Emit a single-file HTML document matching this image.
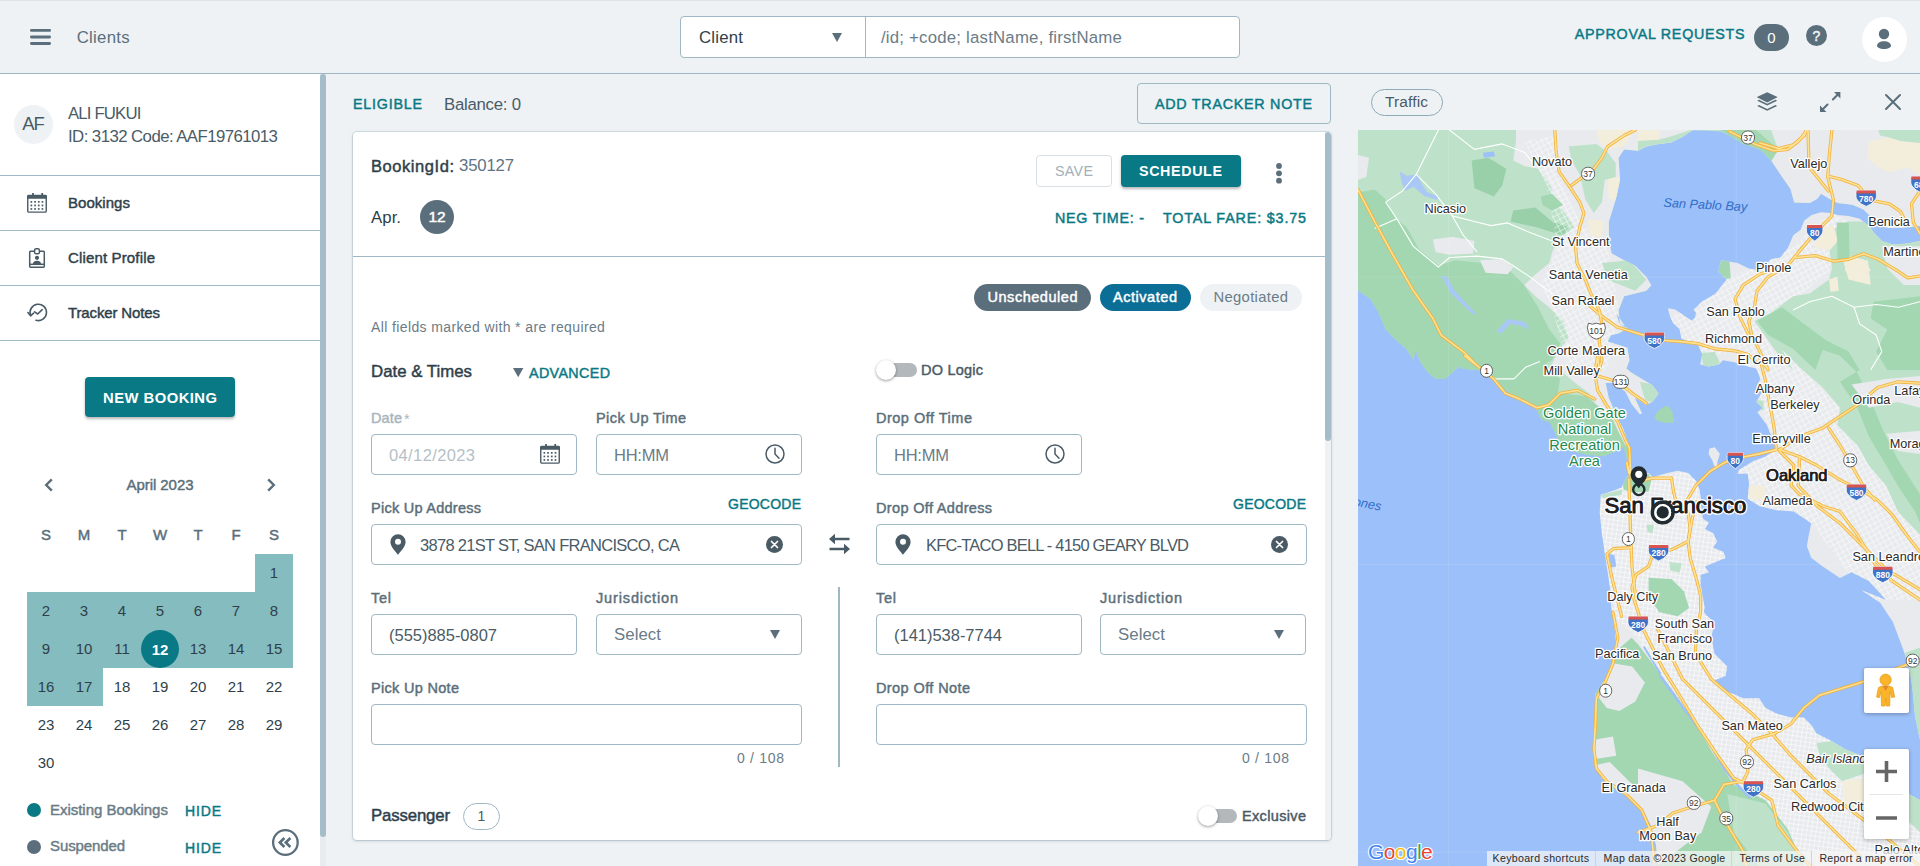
<!DOCTYPE html>
<html lang="en"><head><meta charset="utf-8"><title>Clients</title>
<style>
*{box-sizing:border-box;margin:0;padding:0}
html,body{width:1920px;height:866px;overflow:hidden;background:#eef2f5;font-family:"Liberation Sans", sans-serif;color:#4a5b66}
.abs,.t,header,aside,main,section,nav,button,.box,.ico{position:absolute}
.t{white-space:pre;display:block}
.sb{-webkit-text-stroke:.45px currentColor}
button{font-family:inherit;border:0;background:none;cursor:pointer}
header{left:0;top:0;width:1920px;height:74px;border-bottom:1px solid #9fb8c5;border-top:1px solid #dde4e9;background:#eef2f5}
aside.side{left:0;top:74px;width:320px;height:792px;background:#fff}
.resizer{left:320px;top:74px;width:6px;height:763px;background:#a5bdc9;border-radius:3px}
.rtrack{left:320px;top:74px;width:6px;height:792px;background:#e6ecf0}
.hr{position:absolute;height:1px;background:#9fb8c5}
.box{background:#fff;border:1px solid #9fb8c5;border-radius:4px}
.teal{background:#087985;border-radius:4px;box-shadow:0 2px 3px rgba(0,0,0,.28)}
.card{left:353px;top:132px;width:978px;height:708px;background:#fff;border-radius:4px;box-shadow:0 1px 3px rgba(60,80,95,.25),0 0 0 1px rgba(120,160,175,.22);overflow:hidden}
.pill{position:absolute;border-radius:14px}
svg{position:absolute;overflow:visible}
</style></head><body>
<header>
<svg class="ico" style="left:30px;top:28px" width="21" height="16" viewBox="0 0 21 16"><path d="M1.4 1.400h18.200M1.400 8h18.200M1.400 14.500h18.200" stroke="#5a6f7b" stroke-width="2.800" stroke-linecap="round" fill="none"/></svg>
<span class="t" style="left:76.7px;top:28.8px;font-size:16.8px;line-height:16.8px;color:#5a6f7b;letter-spacing:0.28px;">Clients</span>
<div class="box" style="left:680px;top:15px;width:560px;height:42px"></div>
<div class="abs" style="left:865px;top:16px;width:1px;height:40px;background:#9fb8c5"></div>
<span class="t" style="left:699.0px;top:29.3px;font-size:16.8px;line-height:16.8px;color:#2f3f4a;letter-spacing:0.22px;">Client</span>
<svg style="left:832px;top:32px" width="10" height="9"><path d="M0 0h10l-5 9z" fill="#5a6f7b"/></svg>
<span class="t" style="left:881.0px;top:29.3px;font-size:16.8px;line-height:16.8px;color:#6b7c87;letter-spacing:0.21px;">/id; +code; lastName, firstName</span>
<span class="t sb" style="left:1574.7px;top:25.9px;font-size:14.3px;line-height:14.3px;color:#087985;letter-spacing:0.74px;">APPROVAL REQUESTS</span>
<div class="pill" style="left:1754px;top:23px;width:35px;height:27px;background:#5a6f7b"></div>
<span class="t" style="left:1767.3px;top:28.5px;font-size:15px;line-height:15px;color:#fff;">0</span>
<div class="abs" style="left:1806px;top:24px;width:21px;height:21px;border-radius:50%;background:#5a6f7b"></div>
<span class="t sb" style="left:1812.6px;top:28.1px;font-size:14px;line-height:14px;color:#eef2f5;">?</span>
<div class="abs" style="left:1862px;top:16px;width:45px;height:45px;border-radius:50%;background:#fff"></div>
<svg style="left:1875px;top:27px" width="18" height="22" viewBox="0 0 18 22"><circle cx="9" cy="6" r="5.200" fill="#5a6f7b"/><path d="M2 17.800c0-2.600 3.100-4.600 7-4.600s7 2 7 4.600c0 1.800-3.100 3.200-7 3.200s-7-1.400-7-3.200z" fill="#5a6f7b"/></svg>
</header>
<aside class="side">
<div class="abs" style="left:14px;top:31px;width:39px;height:39px;border-radius:50%;background:#eef2f5"></div>
<span class="t" style="left:22.2px;top:41.3px;font-size:18.5px;line-height:18.5px;letter-spacing:-1.14px;">AF</span>
<span class="t" style="left:68.0px;top:31.8px;font-size:16.8px;line-height:16.8px;letter-spacing:-0.85px;">ALI FUKUI</span>
<span class="t" style="left:68.0px;top:54.8px;font-size:16.8px;line-height:16.8px;letter-spacing:-0.56px;">ID: 3132 Code: AAF19761013</span>
<div class="hr" style="left:0;top:101px;width:320px"></div>
<span class="t sb" style="left:68.0px;top:121.3px;font-size:15px;line-height:15px;color:#2f3f4a;letter-spacing:0.04px;">Bookings</span>
<div class="hr" style="left:0;top:156px;width:320px"></div>
<span class="t sb" style="left:68.0px;top:176.3px;font-size:15px;line-height:15px;color:#2f3f4a;letter-spacing:0.15px;">Client Profile</span>
<div class="hr" style="left:0;top:211px;width:320px"></div>
<span class="t sb" style="left:68.0px;top:231.3px;font-size:15px;line-height:15px;color:#2f3f4a;letter-spacing:-0.14px;">Tracker Notes</span>
<div class="hr" style="left:0;top:266px;width:320px"></div>
<svg style="left:27px;top:119px" width="20" height="20" viewBox="0 0 20 20" fill="#4a5b66"><path d="M1.5 1.800h17a1.500 1.500 0 0 1 1.500 1.500V5.800H0V3.300A1.500 1.500 0 0 1 1.500 1.800z"/><rect x="5.100" y="0" width="1.800" height="3"/><rect x="14.300" y="0" width="1.800" height="3"/><rect x="0.750" y="2.600" width="18.500" height="16.500" rx="1.200" fill="none" stroke="#4a5b66" stroke-width="1.400"/><rect x="3.5" y="8" width="1.700" height="1.700" /><rect x="7.2" y="8" width="1.700" height="1.700" /><rect x="10.9" y="8" width="1.700" height="1.700" /><rect x="14.6" y="8" width="1.700" height="1.700" /><rect x="3.5" y="11.6" width="1.700" height="1.700" /><rect x="7.2" y="11.6" width="1.700" height="1.700" /><rect x="10.9" y="11.6" width="1.700" height="1.700" /><rect x="14.6" y="11.6" width="1.700" height="1.700" /><rect x="3.5" y="15.1" width="1.700" height="1.700" /><rect x="7.2" y="15.1" width="1.700" height="1.700" /><rect x="10.9" y="15.1" width="1.700" height="1.700" /><rect x="14.6" y="15.1" width="1.700" height="1.700" /></svg><svg style="left:29px;top:174px" width="16" height="20" viewBox="0 0 16 20" fill="none" stroke="#4a5b66" stroke-width="1.5"><path d="M5 3.2H1.6a.9.9 0 0 0-.9.9v14.2a.9.9 0 0 0 .9.9h12.8a.9.9 0 0 0 .9-.9V4.100a.9.9 0 0 0-.9-.9H11"/><rect x="5.6" y="0.75" width="4.8" height="5" rx="1.6"/><path d="M1 16.3h14"/><circle cx="8" cy="9.8" r="2.1" fill="#4a5b66" stroke="none"/><path d="M3.9 16.3a4.1 3.6 0 0 1 8.2 0z" fill="#4a5b66" stroke="none"/></svg><svg style="left:26.5px;top:229px" width="21" height="19" viewBox="0 0 21 19" fill="none" stroke="#4a5b66" stroke-width="1.6" stroke-linecap="round" stroke-linejoin="round"><path d="M3.6 12.3A8.2 8.2 0 1 1 9 17.3"/><path d="M0.9 9.6l2.7 3.2 3-2.6" /><path d="M7.600 8.800l3.1 2.2 4.500-4.300"/></svg>
<button class="teal" style="left:85px;top:303px;width:150px;height:40px"></button>
<span class="t" style="left:103.0px;top:316.8px;font-size:14.8px;line-height:14.8px;font-weight:700;color:#fff;letter-spacing:0.47px;">NEW BOOKING</span>
<svg style="left:44px;top:403.5px" width="10" height="14" viewBox="0 0 10 14"><path d="M7.800 1.400L2.200 7l5.600 5.600" stroke="#5a6f7b" stroke-width="2.400" fill="none"/></svg>
<svg style="left:265.500px;top:403.5px" width="10" height="14" viewBox="0 0 10 14"><path d="M2.200 1.400l5.600 5.600-5.600 5.600" stroke="#5a6f7b" stroke-width="2.400" fill="none"/></svg>
<span class="t sb" style="left:126.5px;top:402.8px;font-size:15px;line-height:15px;color:#5a6f7b;letter-spacing:-0.06px;">April 2023</span>
<div class="abs" style="left:255px;top:480px;width:38px;height:38px;background:#85bcc0"></div>
<div class="abs" style="left:27px;top:518px;width:266px;height:76px;background:#85bcc0"></div>
<div class="abs" style="left:27px;top:594px;width:76px;height:38px;background:#85bcc0"></div>
<div class="abs" style="left:141px;top:556px;width:38px;height:38px;border-radius:50%;background:#087985"></div>
<span class="t sb" style="left:41.0px;top:453.3px;font-size:15px;line-height:15px;color:#5a6f7b;">S</span>
<span class="t sb" style="left:77.8px;top:453.3px;font-size:15px;line-height:15px;color:#5a6f7b;">M</span>
<span class="t sb" style="left:117.4px;top:453.3px;font-size:15px;line-height:15px;color:#5a6f7b;">T</span>
<span class="t sb" style="left:152.9px;top:453.3px;font-size:15px;line-height:15px;color:#5a6f7b;">W</span>
<span class="t sb" style="left:193.4px;top:453.3px;font-size:15px;line-height:15px;color:#5a6f7b;">T</span>
<span class="t sb" style="left:231.4px;top:453.3px;font-size:15px;line-height:15px;color:#5a6f7b;">F</span>
<span class="t sb" style="left:269.0px;top:453.3px;font-size:15px;line-height:15px;color:#5a6f7b;">S</span>
<span class="t" style="left:269.8px;top:491.3px;font-size:15px;line-height:15px;color:#2f3f4a;">1</span>
<span class="t" style="left:41.8px;top:529.3px;font-size:15px;line-height:15px;color:#2f3f4a;">2</span>
<span class="t" style="left:79.8px;top:529.3px;font-size:15px;line-height:15px;color:#2f3f4a;">3</span>
<span class="t" style="left:117.8px;top:529.3px;font-size:15px;line-height:15px;color:#2f3f4a;">4</span>
<span class="t" style="left:155.8px;top:529.3px;font-size:15px;line-height:15px;color:#2f3f4a;">5</span>
<span class="t" style="left:193.8px;top:529.3px;font-size:15px;line-height:15px;color:#2f3f4a;">6</span>
<span class="t" style="left:231.8px;top:529.3px;font-size:15px;line-height:15px;color:#2f3f4a;">7</span>
<span class="t" style="left:269.8px;top:529.3px;font-size:15px;line-height:15px;color:#2f3f4a;">8</span>
<span class="t" style="left:41.8px;top:567.3px;font-size:15px;line-height:15px;color:#2f3f4a;">9</span>
<span class="t" style="left:75.7px;top:567.3px;font-size:15px;line-height:15px;color:#2f3f4a;">10</span>
<span class="t" style="left:114.2px;top:567.3px;font-size:15px;line-height:15px;color:#2f3f4a;">11</span>
<span class="t" style="left:151.7px;top:567.8px;font-size:15px;line-height:15px;font-weight:700;color:#fff;">12</span>
<span class="t" style="left:189.7px;top:567.3px;font-size:15px;line-height:15px;color:#2f3f4a;">13</span>
<span class="t" style="left:227.7px;top:567.3px;font-size:15px;line-height:15px;color:#2f3f4a;">14</span>
<span class="t" style="left:265.7px;top:567.3px;font-size:15px;line-height:15px;color:#2f3f4a;">15</span>
<span class="t" style="left:37.7px;top:605.3px;font-size:15px;line-height:15px;color:#2f3f4a;">16</span>
<span class="t" style="left:75.7px;top:605.3px;font-size:15px;line-height:15px;color:#2f3f4a;">17</span>
<span class="t" style="left:113.7px;top:605.3px;font-size:15px;line-height:15px;color:#2f3f4a;">18</span>
<span class="t" style="left:151.7px;top:605.3px;font-size:15px;line-height:15px;color:#2f3f4a;">19</span>
<span class="t" style="left:189.7px;top:605.3px;font-size:15px;line-height:15px;color:#2f3f4a;">20</span>
<span class="t" style="left:227.7px;top:605.3px;font-size:15px;line-height:15px;color:#2f3f4a;">21</span>
<span class="t" style="left:265.7px;top:605.3px;font-size:15px;line-height:15px;color:#2f3f4a;">22</span>
<span class="t" style="left:37.7px;top:643.3px;font-size:15px;line-height:15px;color:#2f3f4a;">23</span>
<span class="t" style="left:75.7px;top:643.3px;font-size:15px;line-height:15px;color:#2f3f4a;">24</span>
<span class="t" style="left:113.7px;top:643.3px;font-size:15px;line-height:15px;color:#2f3f4a;">25</span>
<span class="t" style="left:151.7px;top:643.3px;font-size:15px;line-height:15px;color:#2f3f4a;">26</span>
<span class="t" style="left:189.7px;top:643.3px;font-size:15px;line-height:15px;color:#2f3f4a;">27</span>
<span class="t" style="left:227.7px;top:643.3px;font-size:15px;line-height:15px;color:#2f3f4a;">28</span>
<span class="t" style="left:265.7px;top:643.3px;font-size:15px;line-height:15px;color:#2f3f4a;">29</span>
<span class="t" style="left:37.7px;top:681.3px;font-size:15px;line-height:15px;color:#2f3f4a;">30</span>
<div class="abs" style="left:27px;top:729px;width:14px;height:14px;border-radius:50%;background:#087985"></div>
<span class="t sb" style="left:50.0px;top:728.3px;font-size:15px;line-height:15px;color:#6b7c87;letter-spacing:-0.03px;">Existing Bookings</span>
<span class="t sb" style="left:185.0px;top:730.1px;font-size:14px;line-height:14px;color:#087985;letter-spacing:0.85px;">HIDE</span>
<div class="abs" style="left:27px;top:766px;width:14px;height:14px;border-radius:50%;background:#5a6f7b"></div>
<span class="t sb" style="left:50.0px;top:764.3px;font-size:15px;line-height:15px;color:#6b7c87;letter-spacing:-0.11px;">Suspended</span>
<span class="t sb" style="left:185.0px;top:767.1px;font-size:14px;line-height:14px;color:#087985;letter-spacing:0.85px;">HIDE</span>
<svg style="left:271px;top:755px" width="28" height="28" viewBox="0 0 28 28"><circle cx="14.400" cy="13.500" r="12.300" fill="none" stroke="#5a6f7b" stroke-width="2.300"/><path d="M13.400 9l-4.600 4.500 4.600 4.500M19.400 9l-4.600 4.500 4.600 4.500" stroke="#5a6f7b" stroke-width="2.600" fill="none"/></svg>
</aside>
<div class="abs rtrack"></div><div class="abs resizer"></div>
<main style="left:326px;top:74px;width:1032px;height:792px">
<span class="t sb" style="left:27.0px;top:22.9px;font-size:14.3px;line-height:14.3px;color:#087985;letter-spacing:0.77px;">ELIGIBLE</span>
<span class="t" style="left:118.0px;top:22.8px;font-size:16.8px;line-height:16.8px;letter-spacing:-0.26px;">Balance: 0</span>
<button class="box" style="left:811px;top:9px;width:194px;height:41px;background:transparent"></button>
<span class="t sb" style="left:829.0px;top:22.9px;font-size:14.3px;line-height:14.3px;color:#087985;letter-spacing:0.74px;">ADD TRACKER NOTE</span>
<section class="card" style="left:27px;top:58px">
<div class="abs" style="left:972px;top:0;width:6px;height:708px;background:#eef2f5"></div>
<div class="abs" style="left:972px;top:0;width:6px;height:309px;background:#a5bdc9;border-radius:3px"></div>
<span class="t sb" style="left:18.0px;top:26.0px;font-size:16.5px;line-height:16.5px;color:#2f3f4a;letter-spacing:0.56px;">BookingId:</span>
<span class="t" style="left:106.0px;top:25.8px;font-size:16.8px;line-height:16.8px;color:#5f7485;letter-spacing:-0.20px;">350127</span>
<button class="box" style="left:683px;top:23px;width:76px;height:32px;border-color:#d9e0e5"></button>
<span class="t" style="left:702.0px;top:31.9px;font-size:14.3px;line-height:14.3px;color:#a3b0b8;letter-spacing:0.30px;">SAVE</span>
<button class="teal" style="left:768px;top:23px;width:120px;height:32px"></button>
<span class="t" style="left:786.0px;top:31.9px;font-size:14.3px;line-height:14.3px;font-weight:700;color:#fff;letter-spacing:0.62px;">SCHEDULE</span>
<svg style="left:922.8px;top:31.30000000000001px" width="6" height="21" viewBox="0 0 6 21"><circle cx="3" cy="3" r="2.900" fill="#5a6f7b"/><circle cx="3" cy="10.300" r="2.900" fill="#5a6f7b"/><circle cx="3" cy="17.700" r="2.900" fill="#5a6f7b"/></svg>
<span class="t" style="left:18.0px;top:77.5px;font-size:16.8px;line-height:16.8px;color:#2f3f4a;letter-spacing:0.05px;">Apr.</span>
<div class="abs" style="left:67px;top:68px;width:34px;height:34px;border-radius:50%;background:#5a6f7b"></div>
<span class="t sb" style="left:75.4px;top:77.4px;font-size:15.5px;line-height:15.5px;color:#fff;">12</span>
<span class="t sb" style="left:702.0px;top:78.6px;font-size:14.3px;line-height:14.3px;color:#087985;letter-spacing:0.74px;">NEG TIME: -</span>
<span class="t sb" style="left:810.0px;top:78.6px;font-size:14.3px;line-height:14.3px;color:#087985;letter-spacing:0.86px;">TOTAL FARE: $3.75</span>
<div class="hr" style="left:0;top:124px;width:972px"></div>
<div class="pill" style="left:621px;top:152px;width:117px;height:27px;background:#5a6f7b"></div>
<span class="t sb" style="left:634.5px;top:157.7px;font-size:14.5px;line-height:14.5px;color:#fff;letter-spacing:0.53px;">Unscheduled</span>
<div class="pill" style="left:747px;top:152px;width:91px;height:27px;background:#0b6e96"></div>
<span class="t sb" style="left:760.0px;top:157.7px;font-size:14.5px;line-height:14.5px;color:#fff;letter-spacing:0.54px;">Activated</span>
<div class="pill" style="left:847px;top:152px;width:102px;height:27px;background:#eef2f5"></div>
<span class="t" style="left:860.5px;top:157.5px;font-size:14.8px;line-height:14.8px;color:#6b7c87;letter-spacing:0.32px;">Negotiated</span>
<span class="t" style="left:18.0px;top:187.6px;font-size:14px;line-height:14px;color:#6b7c87;letter-spacing:0.38px;">All fields marked with * are required</span>
<span class="t sb" style="left:18.0px;top:231.8px;font-size:16.8px;line-height:16.8px;color:#2f3f4a;letter-spacing:0.02px;">Date &amp; Times</span>
<svg style="left:159.79999999999995px;top:236px" width="10.4" height="9.2"><path d="M0 0h10.400l-5.200 9.200z" fill="#5a6f7b"/></svg>
<span class="t sb" style="left:176.0px;top:233.9px;font-size:14.3px;line-height:14.3px;color:#087985;letter-spacing:0.37px;">ADVANCED</span>
<div class="abs" style="left:535px;top:231px;width:29px;height:14px;border-radius:7px;background:#b3b8bc"></div><div class="abs" style="left:523px;top:228px;width:20px;height:20px;border-radius:50%;background:#fff;box-shadow:0 1px 3px rgba(0,0,0,.4)"></div>
<span class="t sb" style="left:568.0px;top:230.7px;font-size:14.5px;line-height:14.5px;letter-spacing:0.22px;">DO Logic</span>
<span class="t sb" style="left:18.0px;top:278.7px;font-size:14.5px;line-height:14.5px;color:#a9b5bd;letter-spacing:0.12px;">Date</span>
<span class="t" style="left:51.0px;top:279.7px;font-size:14.5px;line-height:14.5px;color:#a9b5bd;">*</span>
<span class="t sb" style="left:243.0px;top:278.7px;font-size:14.5px;line-height:14.5px;color:#5b6f7a;letter-spacing:0.42px;">Pick Up Time</span>
<span class="t sb" style="left:523.0px;top:278.7px;font-size:14.5px;line-height:14.5px;color:#5b6f7a;letter-spacing:0.50px;">Drop Off Time</span>
<div class="box" style="left:18px;top:302px;width:206px;height:41px;"></div>
<span class="t" style="left:36.0px;top:314.5px;font-size:16.5px;line-height:16.5px;color:#b4bfc7;letter-spacing:0.38px;">04/12/2023</span>
<div class="box" style="left:243px;top:302px;width:206px;height:41px;"></div>
<span class="t" style="left:261.0px;top:314.5px;font-size:16.5px;line-height:16.5px;color:#6b7c87;letter-spacing:-0.23px;">HH:MM</span>
<div class="box" style="left:523px;top:302px;width:206px;height:41px;"></div>
<span class="t" style="left:541.0px;top:314.5px;font-size:16.5px;line-height:16.5px;color:#6b7c87;letter-spacing:-0.23px;">HH:MM</span>
<span class="t sb" style="left:18.0px;top:368.7px;font-size:14.5px;line-height:14.5px;color:#5b6f7a;letter-spacing:0.26px;">Pick Up Address</span>
<span class="t sb" style="left:375.0px;top:365.1px;font-size:14px;line-height:14px;color:#087985;letter-spacing:0.24px;">GEOCODE</span>
<span class="t sb" style="left:523.0px;top:368.7px;font-size:14.5px;line-height:14.5px;color:#5b6f7a;letter-spacing:0.34px;">Drop Off Address</span>
<span class="t sb" style="left:880.0px;top:365.1px;font-size:14px;line-height:14px;color:#087985;letter-spacing:0.24px;">GEOCODE</span>
<div class="box" style="left:18px;top:392px;width:431px;height:41px;"></div>
<span class="t" style="left:67.0px;top:405.0px;font-size:16.5px;line-height:16.5px;letter-spacing:-0.71px;">3878 21ST ST, SAN FRANCISCO, CA</span>
<div class="box" style="left:523px;top:392px;width:431px;height:41px;"></div>
<span class="t" style="left:573.0px;top:405.0px;font-size:16.5px;line-height:16.5px;letter-spacing:-0.80px;">KFC-TACO BELL - 4150 GEARY BLVD</span>
<span class="t sb" style="left:18.0px;top:458.7px;font-size:14.5px;line-height:14.5px;color:#5b6f7a;letter-spacing:0.73px;">Tel</span>
<span class="t sb" style="left:243.0px;top:458.7px;font-size:14.5px;line-height:14.5px;color:#5b6f7a;letter-spacing:0.86px;">Jurisdiction</span>
<span class="t sb" style="left:523.0px;top:458.7px;font-size:14.5px;line-height:14.5px;color:#5b6f7a;letter-spacing:0.73px;">Tel</span>
<span class="t sb" style="left:747.0px;top:458.7px;font-size:14.5px;line-height:14.5px;color:#5b6f7a;letter-spacing:0.86px;">Jurisdiction</span>
<div class="box" style="left:18px;top:482px;width:206px;height:41px;"></div>
<span class="t" style="left:36.0px;top:495.0px;font-size:16.5px;line-height:16.5px;letter-spacing:-0.02px;">(555)885-0807</span>
<div class="box" style="left:243px;top:482px;width:206px;height:41px;"></div>
<span class="t" style="left:261.0px;top:494.8px;font-size:16.8px;line-height:16.8px;color:#6b7c87;letter-spacing:0.07px;">Select</span>
<div class="box" style="left:523px;top:482px;width:206px;height:41px;"></div>
<span class="t" style="left:541.0px;top:495.0px;font-size:16.5px;line-height:16.5px;letter-spacing:-0.02px;">(141)538-7744</span>
<div class="box" style="left:747px;top:482px;width:206px;height:41px;"></div>
<span class="t" style="left:765.0px;top:494.8px;font-size:16.8px;line-height:16.8px;color:#6b7c87;letter-spacing:0.07px;">Select</span>
<svg style="left:417px;top:498px" width="10" height="9"><path d="M0 0h10l-5 9z" fill="#5a6f7b"/></svg>
<svg style="left:921px;top:498px" width="10" height="9"><path d="M0 0h10l-5 9z" fill="#5a6f7b"/></svg>
<div class="abs" style="left:485px;top:455px;width:2px;height:180px;background:#9fb8c5"></div>
<span class="t sb" style="left:18.0px;top:548.7px;font-size:14.5px;line-height:14.5px;color:#5b6f7a;letter-spacing:0.31px;">Pick Up Note</span>
<span class="t sb" style="left:523.0px;top:548.7px;font-size:14.5px;line-height:14.5px;color:#5b6f7a;letter-spacing:0.40px;">Drop Off Note</span>
<div class="box" style="left:18px;top:572px;width:431px;height:41px;"></div>
<div class="box" style="left:523px;top:572px;width:431px;height:41px;"></div>
<span class="t" style="left:384.0px;top:619.1px;font-size:14px;line-height:14px;color:#6b7c87;letter-spacing:0.70px;">0 / 108</span>
<span class="t" style="left:889.0px;top:619.1px;font-size:14px;line-height:14px;color:#6b7c87;letter-spacing:0.70px;">0 / 108</span>
<span class="t sb" style="left:18.0px;top:675.8px;font-size:16.8px;line-height:16.8px;color:#2f3f4a;letter-spacing:-0.15px;">Passenger</span>
<div class="pill" style="left:110px;top:671px;width:37px;height:27px;border:1px solid #9fb8c5;background:#fff"></div>
<span class="t" style="left:124.6px;top:677.1px;font-size:14px;line-height:14px;">1</span>
<div class="abs" style="left:857px;top:677px;width:26.5px;height:14px;border-radius:7px;background:#b3b8bc"></div><div class="abs" style="left:845px;top:674px;width:20px;height:20px;border-radius:50%;background:#fff;box-shadow:0 1px 3px rgba(0,0,0,.4)"></div>
<span class="t sb" style="left:889.0px;top:676.7px;font-size:14.5px;line-height:14.5px;letter-spacing:0.34px;">Exclusive</span>
<svg style="left:187px;top:312px" width="20" height="20" viewBox="0 0 20 20" fill="#4a5b66"><path d="M1.5 1.800h17a1.500 1.500 0 0 1 1.500 1.500V5.800H0V3.300A1.500 1.500 0 0 1 1.500 1.800z"/><rect x="5.100" y="0" width="1.800" height="3"/><rect x="14.300" y="0" width="1.800" height="3"/><rect x="0.750" y="2.600" width="18.500" height="16.500" rx="1.200" fill="none" stroke="#4a5b66" stroke-width="1.400"/><rect x="3.5" y="8" width="1.700" height="1.700" /><rect x="7.2" y="8" width="1.700" height="1.700" /><rect x="10.9" y="8" width="1.700" height="1.700" /><rect x="14.6" y="8" width="1.700" height="1.700" /><rect x="3.5" y="11.6" width="1.700" height="1.700" /><rect x="7.2" y="11.6" width="1.700" height="1.700" /><rect x="10.9" y="11.6" width="1.700" height="1.700" /><rect x="14.6" y="11.6" width="1.700" height="1.700" /><rect x="3.5" y="15.1" width="1.700" height="1.700" /><rect x="7.2" y="15.1" width="1.700" height="1.700" /><rect x="10.9" y="15.1" width="1.700" height="1.700" /><rect x="14.6" y="15.1" width="1.700" height="1.700" /></svg><svg style="left:412.4px;top:312.4px" width="20" height="20" viewBox="0 0 20 20" fill="none" stroke="#4a5b66" stroke-width="1.5" stroke-linecap="round"><circle cx="10" cy="10" r="9"/><path d="M10 4.200V10l4 4.200"/></svg><svg style="left:692.4000000000001px;top:312.4px" width="20" height="20" viewBox="0 0 20 20" fill="none" stroke="#4a5b66" stroke-width="1.5" stroke-linecap="round"><circle cx="10" cy="10" r="9"/><path d="M10 4.200V10l4 4.200"/></svg><svg style="left:37px;top:402.0px" width="16" height="21" viewBox="0 0 16 21"><path d="M8 0.300a7.600 7.600 0 0 1 7.600 7.600c0 5-5.200 9.300-7.600 12.800C5.600 17.200.4 12.900.4 7.900A7.600 7.600 0 0 1 8 .3z" fill="#4a5b66"/><circle cx="8" cy="7.700" r="3" fill="#fff"/></svg><svg style="left:542px;top:402.0px" width="16" height="21" viewBox="0 0 16 21"><path d="M8 0.300a7.600 7.600 0 0 1 7.600 7.600c0 5-5.200 9.300-7.600 12.800C5.600 17.200.4 12.900.4 7.900A7.600 7.600 0 0 1 8 .3z" fill="#4a5b66"/><circle cx="8" cy="7.700" r="3" fill="#fff"/></svg><svg style="left:413.0px;top:403.9px" width="17" height="17" viewBox="0 0 17 17"><circle cx="8.5" cy="8.5" r="8.500" fill="#4a5b66"/><path d="M5.500 5.500l6 6M11.500 5.500l-6 6" stroke="#fff" stroke-width="1.700" stroke-linecap="round"/></svg><svg style="left:918.0px;top:403.9px" width="17" height="17" viewBox="0 0 17 17"><circle cx="8.5" cy="8.5" r="8.500" fill="#4a5b66"/><path d="M5.500 5.500l6 6M11.500 5.500l-6 6" stroke="#fff" stroke-width="1.700" stroke-linecap="round"/></svg><svg style="left:475.5px;top:401.5px" width="21" height="20" viewBox="0 0 21 20" fill="#4a5b66"><path d="M0 5l6-5.200v3.900H20.500v2.600H6V10.200z"/><path d="M21 15l-6-5.200v3.900H0.500v2.600H15v3.900z"/></svg>
</section>
</main>
<section class="mapwrap" style="left:1358px;top:74px;width:562px;height:792px">
<div class="pill" style="left:13px;top:15px;width:72px;height:27px;border:1px solid #8eaab8;"></div>
<span class="t" style="left:27.0px;top:20.4px;font-size:15.5px;line-height:15.5px;letter-spacing:0.13px;">Traffic</span>
<svg style="left:398.9000000000001px;top:18px" width="20.4" height="20.2" viewBox="0 0 20.4 20.2" fill="#5a6f7b"><path d="M10.2 0.200L20 4.700a.5.500 0 0 1 0 .9L10.200 10.400.4 5.600a.5.500 0 0 1 0-.9z"/><path d="M0.200 8.700l1.800-.9 8.200 4 8.200-4 1.800.9-10 4.900z"/><path d="M0.200 13.900l1.800-.9 8.200 4 8.200-4 1.800.9-10 4.900z"/></svg>
<svg style="left:461.70000000000005px;top:18px" width="20.4" height="20" viewBox="0 0 20.4 20" fill="#5a6f7b" stroke="#5a6f7b"><path d="M14 0h6.400v6.400z" stroke="none"/><path d="M0 13.600V20h6.400z" stroke="none"/><path d="M12.900 7.500l5-5M7.500 12.500l-5 5" stroke-width="2" stroke-linecap="round"/></svg>
<svg style="left:527px;top:20px" width="16" height="16" viewBox="0 0 16 16"><path d="M1 1l14 14M15 1L1 15" stroke="#5a6f7b" stroke-width="2" stroke-linecap="round"/></svg>
<div class="abs" style="left:0;top:56px;width:562px;height:736px;overflow:hidden;background:#9cc0f9"></div>
<svg style="left:0;top:56px;overflow:hidden" width="562" height="736" viewBox="1358 130 562 736">
<style>.hw{fill:none;stroke:#f2b13c;stroke-width:3.2;stroke-linejoin:round;stroke-linecap:round}.hwi{fill:none;stroke:#fde293;stroke-width:1.6;stroke-linejoin:round;stroke-linecap:round}.rd{fill:none;stroke:#fff;stroke-width:1.1;stroke-linejoin:round}.wl{fill:none;stroke:#9cc0f9;stroke-linejoin:round;stroke-linecap:round}</style>
<defs><clipPath id="cn"><path d="M1358.0 130.0 L1920.0 130.0 L1920.0 226.1 L1904.1 227.6 L1889.3 227.9 L1878.2 225.2 L1870.9 216.8 L1863.5 209.4 L1852.4 204.8 L1837.6 203.0 L1830.2 199.3 L1821.0 193.7 L1817.3 198.7 L1809.9 203.0 L1794.2 202.4 L1790.5 189.1 L1780.3 174.3 L1771.1 160.5 L1760.0 149.4 L1743.3 143.9 L1729.4 135.5 L1721.1 131.4 L1693.4 130.0 L1690.6 131.4 L1682.3 136.9 L1671.2 142.5 L1658.8 143.9 L1646.3 146.6 L1638.0 150.8 L1624.1 149.4 L1618.6 157.7 L1620.0 179.9 L1615.8 199.3 L1608.9 221.5 L1608.9 240.9 L1611.7 253.4 L1624.1 260.3 L1635.2 265.8 L1646.3 276.9 L1651.3 285.3 L1646.3 290.8 L1635.2 293.6 L1624.1 296.3 L1618.6 310.2 L1620.0 324.1 L1626.9 329.6 L1616.0 312.5 L1619.1 322.9 L1627.4 328.1 L1619.1 333.3 L1610.8 335.3 L1607.7 341.6 L1627.4 347.8 L1629.5 360.3 L1626.4 368.6 L1631.6 372.7 L1642.0 379.0 L1652.4 385.2 L1658.6 393.5 L1652.4 401.8 L1646.1 405.0 L1638.8 399.8 L1634.7 397.7 L1642.0 413.3 L1639.9 414.3 L1631.6 403.9 L1625.3 391.5 L1612.9 383.1 L1605.6 383.1 L1608.7 397.7 L1617.0 416.4 L1623.3 428.9 L1627.4 441.3 L1629.5 458.0 L1630.5 472.5 L1623.7 446.7 L1616.4 451.1 L1603.5 456.3 L1586.1 454.5 L1571.7 451.1 L1560.1 443.8 L1555.8 433.7 L1550.0 422.2 L1541.4 419.3 L1537.0 410.6 L1528.4 402.0 L1513.9 396.2 L1502.4 387.5 L1493.7 377.4 L1479.3 370.2 L1462.0 368.8 L1459.1 365.9 L1453.3 371.7 L1444.6 378.9 L1436.0 378.9 L1427.3 371.7 L1420.1 361.6 L1415.8 350.0 L1413.4 360.1 L1406.5 349.0 L1396.8 340.7 L1385.7 329.6 L1378.8 313.0 L1370.5 299.1 L1358.0 290.2Z"/></clipPath><clipPath id="ce"><path d="M1920.0 248.0 L1920.0 240.9 L1907.8 243.6 L1893.0 244.5 L1881.9 240.9 L1874.5 233.5 L1869.0 226.1 L1859.8 218.7 L1848.7 215.9 L1837.6 215.0 L1830.2 213.1 L1821.0 212.2 L1811.7 215.0 L1804.3 220.5 L1800.6 229.8 L1793.3 235.3 L1787.7 248.2 L1780.3 257.5 L1771.1 259.3 L1760.0 270.4 L1748.8 268.5 L1737.7 263.0 L1721.1 260.2 L1718.3 271.3 L1726.6 279.6 L1715.6 293.4 L1701.7 301.7 L1693.4 310.1 L1696.0 312.5 L1695.0 317.7 L1691.8 320.8 L1682.5 314.5 L1675.2 309.4 L1667.9 308.3 L1670.0 316.6 L1673.1 322.9 L1679.4 329.1 L1681.5 338.5 L1687.7 341.6 L1698.1 344.7 L1702.2 354.0 L1700.2 364.4 L1708.5 366.5 L1718.9 364.4 L1723.0 360.3 L1735.5 362.4 L1748.0 366.5 L1756.3 368.6 L1760.4 379.0 L1756.3 387.3 L1762.5 391.5 L1756.3 401.8 L1762.5 408.1 L1757.3 412.2 L1766.7 424.7 L1770.0 433.0 L1773.7 439.5 L1776.5 449.6 L1765.0 456.8 L1753.5 461.1 L1739.0 469.8 L1737.6 474.1 L1747.7 473.5 L1749.1 484.2 L1747.7 498.7 L1759.2 505.9 L1776.5 510.2 L1793.9 511.6 L1811.2 523.2 L1808.3 537.6 L1806.9 546.3 L1811.2 557.8 L1822.7 566.5 L1840.0 578.0 L1851.6 572.3 L1868.9 580.9 L1886.2 600.0 L1861.1 590.0 L1880.2 602.7 L1892.9 621.9 L1902.5 647.4 L1908.9 666.5 L1912.1 685.6 L1915.2 717.5 L1920.0 739.8 L1920.0 866.0 L1920.0 248.0Z"/></clipPath><clipPath id="cp"><path d="M1600.8 494.7 L1611.2 491.6 L1621.6 487.4 L1625.7 479.1 L1629.9 472.9 L1648.6 472.9 L1652.7 477.0 L1667.3 472.9 L1677.7 470.8 L1688.1 472.9 L1696.4 481.2 L1699.5 489.5 L1700.6 497.8 L1701.6 510.3 L1702.6 518.6 L1708.9 522.7 L1704.7 529.0 L1713.0 533.1 L1717.2 541.5 L1713.0 547.7 L1723.4 551.8 L1725.5 558.1 L1715.1 562.2 L1704.7 566.4 L1708.9 572.6 L1700.6 574.7 L1700.6 585.1 L1702.6 595.5 L1704.7 608.0 L1702.6 616.3 L1698.5 622.5 L1696.4 630.0 L1698.5 590.0 L1701.7 609.1 L1706.5 615.5 L1714.5 621.9 L1711.3 637.8 L1714.5 653.7 L1727.2 666.5 L1725.6 676.0 L1712.9 680.8 L1720.9 688.8 L1743.2 698.3 L1759.1 698.3 L1765.5 707.9 L1778.2 714.3 L1791.0 717.5 L1803.7 717.5 L1811.7 725.4 L1816.5 733.4 L1829.2 739.8 L1845.1 749.3 L1861.1 755.7 L1873.8 768.5 L1892.9 781.2 L1908.9 794.0 L1920.0 800.3 L1920.0 866.0 L1658.0 866.1 L1656.1 845.0 L1651.3 825.9 L1643.3 810.0 L1629.0 797.2 L1613.0 787.6 L1601.9 778.1 L1594.5 765.3 L1593.3 743.0 L1594.5 717.5 L1595.5 693.6 L1605.1 679.3 L1613.0 663.3 L1616.2 644.2 L1614.6 628.3 L1611.4 609.1 L1609.8 590.0 L1614.3 612.1 L1611.2 595.5 L1608.1 574.7 L1604.9 553.9 L1601.8 533.1 L1599.7 512.4Z"/></clipPath></defs>
<pattern id="grid" width="4.6" height="4.6" patternUnits="userSpaceOnUse" patternTransform="rotate(8)"><path d="M0 .5h4.6M.5 0v4.6" stroke="#fff" stroke-width=".9" stroke-opacity=".6" fill="none"/></pattern>
<pattern id="grid2" width="5.2" height="5.2" patternUnits="userSpaceOnUse" patternTransform="rotate(-28)"><path d="M0 .5h5.200M.5 0v5.200" stroke="#fff" stroke-width=".8" stroke-opacity=".6" fill="none"/></pattern>
<rect x="1358" y="130" width="562" height="736" fill="#9cc0f9"/>
<path d="M1358.0 130.0 L1920.0 130.0 L1920.0 226.1 L1904.1 227.6 L1889.3 227.9 L1878.2 225.2 L1870.9 216.8 L1863.5 209.4 L1852.4 204.8 L1837.6 203.0 L1830.2 199.3 L1821.0 193.7 L1817.3 198.7 L1809.9 203.0 L1794.2 202.4 L1790.5 189.1 L1780.3 174.3 L1771.1 160.5 L1760.0 149.4 L1743.3 143.9 L1729.4 135.5 L1721.1 131.4 L1693.4 130.0 L1690.6 131.4 L1682.3 136.9 L1671.2 142.5 L1658.8 143.9 L1646.3 146.6 L1638.0 150.8 L1624.1 149.4 L1618.6 157.7 L1620.0 179.9 L1615.8 199.3 L1608.9 221.5 L1608.9 240.9 L1611.7 253.4 L1624.1 260.3 L1635.2 265.8 L1646.3 276.9 L1651.3 285.3 L1646.3 290.8 L1635.2 293.6 L1624.1 296.3 L1618.6 310.2 L1620.0 324.1 L1626.9 329.6 L1616.0 312.5 L1619.1 322.9 L1627.4 328.1 L1619.1 333.3 L1610.8 335.3 L1607.7 341.6 L1627.4 347.8 L1629.5 360.3 L1626.4 368.6 L1631.6 372.7 L1642.0 379.0 L1652.4 385.2 L1658.6 393.5 L1652.4 401.8 L1646.1 405.0 L1638.8 399.8 L1634.7 397.7 L1642.0 413.3 L1639.9 414.3 L1631.6 403.9 L1625.3 391.5 L1612.9 383.1 L1605.6 383.1 L1608.7 397.7 L1617.0 416.4 L1623.3 428.9 L1627.4 441.3 L1629.5 458.0 L1630.5 472.5 L1623.7 446.7 L1616.4 451.1 L1603.5 456.3 L1586.1 454.5 L1571.7 451.1 L1560.1 443.8 L1555.8 433.7 L1550.0 422.2 L1541.4 419.3 L1537.0 410.6 L1528.4 402.0 L1513.9 396.2 L1502.4 387.5 L1493.7 377.4 L1479.3 370.2 L1462.0 368.8 L1459.1 365.9 L1453.3 371.7 L1444.6 378.9 L1436.0 378.9 L1427.3 371.7 L1420.1 361.6 L1415.8 350.0 L1413.4 360.1 L1406.5 349.0 L1396.8 340.7 L1385.7 329.6 L1378.8 313.0 L1370.5 299.1 L1358.0 290.2Z" fill="#bde2c9"/>
<g clip-path="url(#cn)"><path d="M1358.0 192.4 L1374.6 189.6 L1385.7 199.3 L1395.4 218.7 L1406.5 227.0 L1419.0 249.2 L1438.4 265.8 L1455.0 260.3 L1482.8 263.1 L1507.7 268.6 L1524.3 285.3 L1538.2 307.4 L1549.3 329.6 L1560.4 343.5 L1552.1 360.1 L1535.4 370.1 L1542.8 361.6 L1560.1 378.9 L1557.2 396.2 L1571.7 404.9 L1589.0 399.1 L1597.7 410.6 L1612.1 419.3 L1620.8 436.6 L1628.0 448.2 L1628.0 465.5 L1358.0 470.0 L1358.0 190.0Z" fill="#a2d7b2" />
<path d="M1471.7 160.5 L1488.3 157.7 L1506.3 168.8 L1502.2 185.4 L1493.8 196.5 L1474.4 188.2Z" fill="#99d0aa" />
<path d="M1513.3 210.4 L1535.4 207.6 L1552.1 221.5 L1568.7 227.0 L1563.2 235.4 L1535.4 227.0 L1510.5 221.5Z" fill="#99d0aa" />
<path d="M1449.5 279.7 L1474.4 274.2 L1496.6 285.3 L1513.3 307.4 L1524.3 329.6 L1513.3 340.7 L1488.3 324.1 L1463.4 304.7Z" fill="#a2d7b2" />
<path d="M1399.6 171.6 L1406.5 175.7 L1417.6 174.4 L1420.4 181.3 L1427.3 192.4 L1438.4 196.5 L1437.0 199.9 L1424.5 196.0 L1413.4 186.8 L1405.1 191.0 L1401.8 182.7Z" fill="#a9c8f5" />
<path d="M1441.2 275.6 L1446.7 276.4 L1455.0 290.8 L1467.5 304.7 L1475.8 313.0 L1473.1 314.4 L1462.0 304.1 L1450.9 293.6Z" fill="#a9c8f5" />
<path d="M1496.6 331.0 L1507.7 319.1 L1524.3 321.8 L1529.9 329.6 L1521.6 326.3 L1510.5 323.5 L1500.8 333.8Z" fill="#a9c8f5" />
<path d="M1482.8 152.7 L1493.8 151.6 L1495.2 156.3 L1484.1 157.7Z" fill="#9cc0f9" />
<path d="M1358.0 155.0 L1369.1 157.7 L1366.3 177.1 L1358.0 179.9Z" fill="#e8eaed" />
<path d="M1432.9 239.5 L1452.3 236.7 L1474.4 240.9 L1473.1 253.4 L1449.5 254.8 L1435.6 252.0Z" fill="#e8eaed" />
<path d="M1480.0 260.3 L1502.2 258.9 L1513.3 267.2 L1507.7 274.2 L1485.5 272.8Z" fill="#e8eaed" />
<path d="M1516.0 130.0 L1516.0 141.1 L1513.3 160.5 L1524.3 166.0 L1538.2 168.8 L1552.1 188.2 L1549.3 199.3 L1563.2 210.4 L1574.2 227.0 L1557.6 240.9 L1552.1 252.0 L1549.3 263.1 L1535.4 274.2 L1524.3 285.3 L1535.4 296.3 L1549.3 307.4 L1563.2 321.3 L1568.7 337.9 L1557.6 351.8 L1549.3 370.1 L1542.8 367.3 L1560.1 370.2 L1577.5 384.7 L1589.0 393.3 L1597.7 407.8 L1612.1 416.4 L1619.3 433.7 L1625.1 445.3 L1635.2 445.3 L1700.0 450.0 L1700.0 130.0Z" fill="#e8eaed" />
<path d="M1524.3 141.1 L1557.6 135.5 L1563.2 185.4 L1579.8 221.5 L1607.5 246.4 L1618.6 307.4 L1607.5 370.1 L1568.7 370.1 L1552.1 307.4 L1541.0 285.3 L1557.6 246.4 L1546.5 185.4Z" fill="url(#grid2)" /><path d="M1797.0 130.0 L1870.9 130.0 L1870.9 185.4 L1830.2 191.0 L1804.3 167.0Z" fill="url(#grid)" />
<path d="M1596.4 130.0 L1635.2 130.0 L1624.1 146.6 L1607.5 149.4 L1599.2 141.1Z" fill="#f3eddc" />
<path d="M1607.5 177.1 L1620.0 177.1 L1618.6 199.3 L1608.9 199.3Z" fill="#f3eddc" />
<path d="M1588.1 218.7 L1603.4 221.5 L1602.0 238.1 L1589.5 235.4Z" fill="#f3eddc" />
<path d="M1568.7 146.6 L1596.4 143.9 L1607.5 152.2 L1615.8 163.3 L1615.8 177.1 L1604.7 179.9 L1602.0 202.1 L1593.7 213.2 L1585.3 199.3 L1579.8 174.4 L1571.5 160.5Z" fill="#bde2c9" />
<path d="M1541.0 196.5 L1552.1 193.8 L1563.2 204.9 L1552.1 210.4 L1542.4 204.9Z" fill="#a2d7b2" />
<path d="M1602.0 263.1 L1629.7 260.3 L1646.3 279.7 L1635.2 290.8 L1621.4 285.3 L1607.5 279.7Z" fill="#bde2c9" />
<path d="M1638.0 130.0 L1660.2 130.0 L1658.8 139.7 L1638.0 141.1Z" fill="#f3eddc" />
<path d="M1638.0 141.1 L1658.8 139.7 L1674.0 135.5 L1690.6 130.0 L1693.4 130.0 L1690.6 132.2 L1671.2 143.3 L1646.3 147.2 L1638.0 151.6Z" fill="#bde2c9" />
<path d="M1718.3 128.6 L1754.3 128.6 L1782.0 152.2 L1776.5 160.5 L1759.9 150.8 L1743.3 143.9 L1729.4 135.5Z" fill="#a2d7b2" />
<path d="M1771.1 130.0 L1920.0 130.0 L1920.0 229.8 L1863.5 229.8 L1815.4 203.9 L1787.7 203.9 L1769.2 161.4 L1778.5 150.3Z" fill="#e8eaed" />
<path d="M1869.0 141.1 L1889.3 137.4 L1920.0 141.1 L1920.0 176.2 L1907.8 167.0 L1889.3 172.5 L1878.2 167.0 L1867.2 157.7Z" fill="#f3eddc" />
<path d="M1878.2 130.0 L1920.0 130.0 L1920.0 142.9 L1900.4 141.1 L1889.3 137.4 L1880.1 135.5Z" fill="#bde2c9" />
<path d="M1760.0 141.1 L1776.6 152.2 L1771.1 161.4 L1760.0 150.3Z" fill="#a2d7b2" />
<path d="M1639.9 382.1 L1652.4 384.2 L1659.6 393.5 L1652.4 402.9 L1645.1 399.8 L1642.0 389.4Z" fill="#bde2c9" />
<path d="M1531.3 396.2 L1560.1 393.3 L1586.1 396.2 L1603.5 410.6 L1617.9 430.9 L1626.6 448.2 L1617.9 456.8 L1583.2 456.8 L1560.1 448.2 L1542.8 425.1Z" fill="#a2d7b2" /></g>
<path d="M1920.0 248.0 L1920.0 240.9 L1907.8 243.6 L1893.0 244.5 L1881.9 240.9 L1874.5 233.5 L1869.0 226.1 L1859.8 218.7 L1848.7 215.9 L1837.6 215.0 L1830.2 213.1 L1821.0 212.2 L1811.7 215.0 L1804.3 220.5 L1800.6 229.8 L1793.3 235.3 L1787.7 248.2 L1780.3 257.5 L1771.1 259.3 L1760.0 270.4 L1748.8 268.5 L1737.7 263.0 L1721.1 260.2 L1718.3 271.3 L1726.6 279.6 L1715.6 293.4 L1701.7 301.7 L1693.4 310.1 L1696.0 312.5 L1695.0 317.7 L1691.8 320.8 L1682.5 314.5 L1675.2 309.4 L1667.9 308.3 L1670.0 316.6 L1673.1 322.9 L1679.4 329.1 L1681.5 338.5 L1687.7 341.6 L1698.1 344.7 L1702.2 354.0 L1700.2 364.4 L1708.5 366.5 L1718.9 364.4 L1723.0 360.3 L1735.5 362.4 L1748.0 366.5 L1756.3 368.6 L1760.4 379.0 L1756.3 387.3 L1762.5 391.5 L1756.3 401.8 L1762.5 408.1 L1757.3 412.2 L1766.7 424.7 L1770.0 433.0 L1773.7 439.5 L1776.5 449.6 L1765.0 456.8 L1753.5 461.1 L1739.0 469.8 L1737.6 474.1 L1747.7 473.5 L1749.1 484.2 L1747.7 498.7 L1759.2 505.9 L1776.5 510.2 L1793.9 511.6 L1811.2 523.2 L1808.3 537.6 L1806.9 546.3 L1811.2 557.8 L1822.7 566.5 L1840.0 578.0 L1851.6 572.3 L1868.9 580.9 L1886.2 600.0 L1861.1 590.0 L1880.2 602.7 L1892.9 621.9 L1902.5 647.4 L1908.9 666.5 L1912.1 685.6 L1915.2 717.5 L1920.0 739.8 L1920.0 866.0 L1920.0 248.0Z" fill="#e8eaed"/>
<g clip-path="url(#ce)"><path d="M1693.4 296.2 L1793.1 246.3 L1831.9 213.1 L1848.5 221.4 L1831.9 268.5 L1793.1 301.7 L1759.9 323.9 L1782.0 369.9 L1782.3 350.0 L1840.0 407.7 L1874.7 471.2 L1920.0 534.7 L1920.0 600.0 L1868.9 600.0 L1811.2 523.2 L1747.7 511.6 L1736.1 459.7 L1770.8 436.6 L1753.5 378.9 L1736.1 350.0 L1665.7 369.9 L1665.7 323.9Z" fill="url(#grid2)" />
<path d="M1920.0 221.4 L1848.5 221.4 L1831.9 229.7 L1829.1 246.3 L1831.9 268.5 L1829.1 279.6 L1809.7 293.4 L1793.1 296.2 L1771.0 312.8 L1754.3 321.1 L1768.2 340.5 L1782.0 359.9 L1793.1 369.9 L1782.3 350.0 L1799.6 367.3 L1822.7 387.5 L1840.0 407.7 L1837.2 425.0 L1857.4 445.3 L1868.9 465.5 L1886.2 485.7 L1897.8 511.6 L1920.0 534.7 L1920.0 540.0 L1920.0 225.0Z" fill="#bde2c9" />
<path d="M1757.1 321.1 L1782.0 307.3 L1804.2 323.9 L1826.4 340.5 L1848.5 351.6 L1859.6 369.9 L1840.0 381.8 L1857.4 407.7 L1868.9 436.6 L1886.2 465.5 L1897.8 485.7 L1915.1 511.6 L1920.0 523.2 L1920.0 494.3 L1897.8 459.7 L1883.3 430.8 L1868.9 396.2 L1857.4 373.1 L1840.0 355.8 L1822.7 350.0 L1815.3 369.9 L1793.1 348.8 L1768.2 335.0Z" fill="#a2d7b2" />
<path d="M1873.5 301.7 L1920.0 296.2 L1920.0 369.9 L1887.3 369.9 L1876.2 351.6 L1887.3 329.4 L1870.7 318.4Z" fill="#a2d7b2" />
<path d="M1881.8 246.3 L1920.0 246.3 L1920.0 285.1 L1903.9 285.1 L1887.3 268.5Z" fill="#e8eaed" />
<path d="M1851.6 384.6 L1886.2 378.9 L1920.0 376.0 L1920.0 407.7 L1897.8 402.0 L1868.9 407.7Z" fill="#e8eaed" />
<path d="M1886.2 433.7 L1920.0 430.8 L1920.0 453.9 L1897.8 451.0Z" fill="#e8eaed" />
<path d="M1815.4 226.1 L1833.9 226.1 L1837.6 240.9 L1830.2 250.1 L1815.4 248.2 L1811.7 237.2Z" fill="#f3eddc" />
<path d="M1846.8 255.6 L1863.5 259.3 L1870.9 270.4 L1856.1 277.8 L1845.0 270.4Z" fill="#f3eddc" />
<path d="M1843.0 260.2 L1867.9 260.2 L1870.7 285.1 L1848.5 279.6Z" fill="#f3eddc" />
<path d="M1829.1 279.6 L1837.4 276.8 L1838.8 290.7 L1830.5 292.0Z" fill="#f3eddc" />
<path d="M1836.7 222.4 L1848.7 222.4 L1849.6 259.3 L1837.6 259.3Z" fill="#a2d7b2" />
<path d="M1701.2 353.0 L1714.7 352.0 L1719.9 362.4 L1714.7 368.6 L1703.3 366.5Z" fill="#bde2c9" />
<path d="M1754.2 399.8 L1763.6 400.8 L1763.6 410.2 L1755.2 409.1Z" fill="#bde2c9" />
<path d="M1716.9 258.8 L1729.4 260.2 L1730.8 278.2 L1721.1 279.6 L1716.9 271.3Z" fill="#a2d7b2" />
<path d="M1747.7 485.1 L1765.0 486.2 L1766.4 500.1 L1749.1 498.7Z" fill="#f3eddc" />
<path d="M1902.5 653.7 L1920.0 647.4 L1920.0 743.0 L1913.7 723.8 L1910.5 685.6Z" fill="#bde2c9" /></g>
<path d="M1600.8 494.7 L1611.2 491.6 L1621.6 487.4 L1625.7 479.1 L1629.9 472.9 L1648.6 472.9 L1652.7 477.0 L1667.3 472.9 L1677.7 470.8 L1688.1 472.9 L1696.4 481.2 L1699.5 489.5 L1700.6 497.8 L1701.6 510.3 L1702.6 518.6 L1708.9 522.7 L1704.7 529.0 L1713.0 533.1 L1717.2 541.5 L1713.0 547.7 L1723.4 551.8 L1725.5 558.1 L1715.1 562.2 L1704.7 566.4 L1708.9 572.6 L1700.6 574.7 L1700.6 585.1 L1702.6 595.5 L1704.7 608.0 L1702.6 616.3 L1698.5 622.5 L1696.4 630.0 L1698.5 590.0 L1701.7 609.1 L1706.5 615.5 L1714.5 621.9 L1711.3 637.8 L1714.5 653.7 L1727.2 666.5 L1725.6 676.0 L1712.9 680.8 L1720.9 688.8 L1743.2 698.3 L1759.1 698.3 L1765.5 707.9 L1778.2 714.3 L1791.0 717.5 L1803.7 717.5 L1811.7 725.4 L1816.5 733.4 L1829.2 739.8 L1845.1 749.3 L1861.1 755.7 L1873.8 768.5 L1892.9 781.2 L1908.9 794.0 L1920.0 800.3 L1920.0 866.0 L1658.0 866.1 L1656.1 845.0 L1651.3 825.9 L1643.3 810.0 L1629.0 797.2 L1613.0 787.6 L1601.9 778.1 L1594.5 765.3 L1593.3 743.0 L1594.5 717.5 L1595.5 693.6 L1605.1 679.3 L1613.0 663.3 L1616.2 644.2 L1614.6 628.3 L1611.4 609.1 L1609.8 590.0 L1614.3 612.1 L1611.2 595.5 L1608.1 574.7 L1604.9 553.9 L1601.8 533.1 L1599.7 512.4Z" fill="#e8eaed"/>
<g clip-path="url(#cp)"><path d="M1596.6 489.5 L1708.9 466.6 L1729.7 558.1 L1704.7 630.0 L1733.6 653.7 L1816.5 717.5 L1920.0 794.0 L1920.0 866.0 L1816.5 866.0 L1733.6 787.6 L1669.9 695.2 L1638.0 637.8 L1613.3 616.3 L1598.7 512.4Z" fill="url(#grid)" />
<path d="M1631.6 637.8 L1638.0 644.2 L1657.1 669.7 L1676.2 695.2 L1695.4 723.8 L1714.5 755.7 L1733.6 784.4 L1765.5 800.3 L1787.8 829.0 L1803.7 866.0 L1658.0 866.1 L1581.1 866.1 L1581.1 653.8 L1613.0 653.8Z" fill="#a2d7b2" />
<path d="M1727.2 794.0 L1765.5 803.5 L1787.8 832.2 L1803.7 866.0 L1759.1 866.0 L1733.6 832.2Z" fill="#bde2c9" />
<path d="M1603.5 679.3 L1613.0 663.3 L1632.1 666.5 L1644.9 682.4 L1635.3 701.6 L1619.4 711.1 L1606.6 707.9 L1597.1 695.2Z" fill="#e8eaed" />
<path d="M1594.5 739.8 L1613.0 736.6 L1616.2 755.8 L1595.5 759.0Z" fill="#e8eaed" />
<path d="M1594.5 765.3 L1609.8 762.1 L1629.0 781.3 L1658.0 806.8 L1658.0 866.1 L1656.1 845.0 L1651.3 825.9 L1643.3 810.0 L1629.0 797.2 L1613.0 787.6 L1601.9 778.1Z" fill="#e8eaed" />
<path d="M1638.0 768.5 L1682.6 781.2 L1711.3 806.7 L1701.7 832.2 L1657.1 866.0 L1638.0 866.0Z" fill="#e8eaed" />
<path d="M1648.6 577.8 L1671.5 578.9 L1683.9 591.3 L1689.1 608.0 L1677.7 616.3 L1659.0 612.1 L1648.6 595.5Z" fill="#a2d7b2" />
<path d="M1622.6 481.2 L1629.9 473.9 L1648.6 473.9 L1651.7 479.1 L1648.6 491.6 L1632.0 492.6 L1623.6 489.5Z" fill="#a2d7b2" />
<path d="M1600.8 494.7 L1611.2 492.2 L1622.6 489.5 L1621.6 494.7 L1602.9 498.2Z" fill="#bde2c9" />
<path d="M1608.7 553.9 L1614.3 555.0 L1616.4 566.4 L1611.2 567.4Z" fill="#9cc0f9" />
<path d="M1669.4 562.2 L1681.8 563.3 L1679.8 572.6 L1670.4 570.6Z" fill="#bde2c9" />
<path d="M1646.5 524.8 L1653.8 524.8 L1652.7 533.1 L1647.6 532.1Z" fill="#bde2c9" />
<path d="M1660.3 676.0 L1676.2 698.3 L1695.4 723.8 L1711.3 746.2 L1724.0 768.5 L1736.8 784.4 L1749.5 797.1" class="wl" stroke-width="2.6"/>
<path d="M1644.4 647.4 L1653.9 663.3 L1660.3 673.5" class="wl" stroke-width="2"/>
<path d="M1842.0 781.2 L1867.4 778.0 L1873.8 794.0 L1867.4 809.9 L1845.1 806.7Z" fill="#f3eddc" />
<path d="M1816.5 743.0 L1842.0 739.8 L1861.1 755.7 L1873.8 768.5 L1861.1 774.8 L1842.0 781.2 L1829.2 768.5 L1819.6 755.7Z" fill="#bde2c9" />
<path d="M1873.8 768.5 L1892.9 781.2 L1920.0 800.3 L1920.0 832.2 L1899.3 813.1 L1880.2 794.0Z" fill="#bde2c9" /></g>
<path d="M1654.4 416.4 L1658.6 410.2 L1666.9 405.6 L1672.1 410.2 L1674.2 422.6 L1664.8 423.1 L1656.5 420.6Z" fill="#a2d7b2" />
<path d="M1709.5 448.6 L1714.7 447.2 L1719.9 453.8 L1717.2 462.5 L1717.8 468.4 L1714.7 467.3 L1712.6 461.1 L1708.5 453.8Z" fill="#e8eaed" />
<path d="M1448.600 130V866M1736.200 130V866M1358 277H1920M1358 564.600H1920M1358 852.200H1920" stroke="#fff" stroke-opacity=".13" stroke-width="1" fill="none"/>
<path d="M1449.5 130.0 L1474.4 149.4 L1502.2 143.9 L1524.3 152.2 L1535.4 166.0" class="rd"/>
<path d="M1438.4 130.0 L1427.3 152.2 L1416.2 174.4 L1402.4 191.0 L1385.7 202.1 L1396.8 218.7 L1374.6 228.4" class="rd"/>
<path d="M1396.8 218.7 L1413.4 246.4 L1438.4 267.2 L1449.5 257.5 L1477.2 256.1 L1502.2 258.9 L1513.3 265.8 L1529.9 276.9 L1552.1 293.6" class="rd"/>
<path d="M1416.2 174.4 L1435.6 193.8 L1452.3 215.9 L1474.4 221.5 L1491.1 225.6 L1507.7 222.9 L1529.9 232.6 L1552.1 240.9" class="rd"/>
<path d="M1452.3 215.9 L1463.4 235.4 L1477.2 252.0" class="rd"/>
<path d="M1493.7 378.9 L1513.9 378.9 L1525.5 367.3 L1539.9 361.6" class="rd"/>
<path d="M1793.1 310.1 L1809.7 301.7 L1831.9 296.2 L1854.1 307.3 L1876.2 304.5 L1898.4 307.3 L1920.0 301.7" class="rd"/>
<path d="M1854.1 307.3 L1859.6 323.9 L1876.2 335.0 L1881.8 351.6 L1870.7 369.9" class="rd"/>
<path d="M1554.8 130.0 L1556.2 152.2 L1559.0 171.6 L1568.7 185.4 L1579.8 202.1 L1583.9 213.2 L1579.8 227.0 L1575.6 246.4 L1577.0 263.1 L1585.3 279.7 L1590.9 293.6 L1599.2 310.2 L1602.0 324.1 L1599.2 340.7 L1602.0 360.1 L1599.2 370.1 L1597.7 355.8 L1594.8 373.1 L1597.7 390.4 L1606.3 404.9 L1617.9 422.2 L1625.1 439.5 L1629.4 448.2 L1630.9 477.1 L1626.8 462.5 L1628.8 472.9" class="hw"/>
<path d="M1571.5 185.4 L1593.7 168.8 L1602.0 157.7 L1607.5 146.6 L1624.1 135.5 L1635.2 130.0" class="hw"/>
<path d="M1729.4 131.4 L1754.3 143.9 L1773.7 150.8 L1787.6 149.4 L1798.7 141.1 L1807.0 130.0" class="hw"/>
<path d="M1590.0 306.2 L1602.5 316.6 L1617.0 327.0 L1644.0 335.3 L1664.8 340.5 L1681.5 341.6 L1698.1 343.6 L1714.7 348.8 L1735.5 350.9 L1748.0 354.5 L1756.3 362.4" class="hw"/>
<path d="M1831.9 130.0 L1829.1 157.7 L1827.8 177.1 L1833.3 199.3 L1831.9 215.9 L1815.3 232.5 L1798.7 251.9 L1787.6 265.7 L1768.2 276.8 L1757.1 290.7 L1754.3 307.3 L1748.8 321.1 L1751.6 335.0 L1759.9 351.6 L1768.2 369.9 L1759.2 355.8 L1765.0 378.9 L1769.3 402.0 L1773.7 425.0 L1776.5 449.6" class="hw"/>
<path d="M1787.6 265.7 L1759.9 274.0 L1743.3 285.1 L1735.0 299.0 L1740.5 318.4 L1748.8 335.0" class="hw"/>
<path d="M1776.5 449.6 L1759.2 453.9 L1744.8 456.8 L1724.6 462.6 L1710.2 471.2 L1695.7 485.7 L1687.1 500.1 L1681.3 511.6" class="hw"/>
<path d="M1795.1 257.5 L1815.4 255.6 L1833.9 261.2 L1848.7 259.3 L1863.5 253.8 L1878.2 259.3 L1896.7 270.4 L1907.8 277.8 L1920.0 276.0" class="hw"/>
<path d="M1828.4 176.2 L1843.1 179.9 L1857.9 185.4 L1870.9 200.2 L1889.3 203.9 L1900.4 211.3 L1906.0 222.4" class="hw"/>
<path d="M1920.0 191.0 L1911.5 203.9 L1913.3 222.4 L1920.0 233.5" class="hw"/>
<path d="M1808.0 130.0 L1809.0 167.0 L1821.0 181.7 L1828.4 191.0" class="hw"/>
<path d="M1760.0 142.9 L1778.5 148.5 L1793.3 144.8 L1804.3 135.5 L1806.2 130.0" class="hw"/>
<path d="M1779.4 449.6 L1799.6 436.6 L1822.7 427.9 L1840.0 416.4 L1857.4 404.8 L1877.6 387.5 L1897.8 381.8 L1920.0 383.2" class="hw"/>
<path d="M1828.5 427.9 L1840.0 445.3 L1851.6 465.5 L1863.1 485.7 L1874.7 500.1" class="hw"/>
<path d="M1779.4 449.6 L1799.6 456.8 L1817.0 465.5 L1840.0 479.9 L1863.1 491.4 L1877.6 500.1 L1892.0 514.5 L1906.4 534.7 L1920.0 552.0" class="hw"/>
<path d="M1779.4 451.0 L1793.9 465.5 L1791.0 485.7 L1799.6 494.3 L1822.7 505.9 L1840.0 511.6 L1857.4 534.7 L1874.7 563.6 L1892.0 580.9 L1920.0 600.0" class="hw"/>
<path d="M1799.6 456.8 L1798.2 485.7 L1817.0 505.9 L1840.0 523.2 L1863.1 546.3 L1886.2 569.4 L1920.0 589.6" class="hw"/>
<path d="M1696.4 502.0 L1692.2 518.6 L1688.1 541.5 L1671.5 549.8 L1652.7 553.9 L1648.6 566.4 L1636.1 574.7 L1632.0 587.2 L1634.0 599.7 L1638.2 612.1 L1642.4 630.0 L1638.0 618.7 L1650.7 644.2 L1663.5 669.7 L1679.4 695.2 L1698.5 727.0 L1717.7 755.7 L1733.6 778.0 L1752.7 787.6 L1771.8 800.3 L1778.2 825.8 L1797.3 851.3 L1810.1 866.0" class="hw"/>
<path d="M1671.5 478.1 L1673.5 491.6 L1677.7 508.2 L1688.1 512.4 L1690.2 529.0 L1688.1 541.5 L1690.2 558.1 L1696.4 578.9 L1700.6 595.5 L1700.6 612.1 L1696.4 630.0 L1695.4 653.7 L1711.3 679.2 L1733.6 698.3 L1752.7 714.3 L1771.8 733.4 L1791.0 755.7 L1810.1 774.8 L1829.2 794.0 L1854.7 813.1 L1880.2 832.2 L1905.7 854.5 L1920.0 866.0" class="hw"/>
<path d="M1657.1 628.2 L1669.9 653.7 L1682.6 679.2 L1708.1 704.7 L1733.6 730.2 L1759.1 755.7 L1781.4 778.0 L1803.7 800.3 L1829.2 825.8 L1861.1 857.7" class="hw"/>
<path d="M1746.3 749.3 L1752.7 739.8 L1775.0 733.4 L1791.0 723.8 L1803.7 707.9 L1819.6 695.2 L1861.1 682.4 L1892.9 669.7 L1920.0 660.1" class="hw"/>
<path d="M1746.3 749.3 L1747.9 771.6 L1743.2 781.2 L1724.0 784.4 L1714.5 800.3 L1692.2 806.7 L1673.1 813.1 L1657.1 825.8 L1638.0 832.2" class="hw"/>
<path d="M1714.5 800.3 L1724.0 819.4 L1733.6 835.4 L1743.2 851.3 L1746.3 866.0" class="hw"/>
<path d="M1628.8 479.1 L1629.9 512.4 L1630.9 541.5 L1632.0 566.4 L1634.0 583.0 L1636.1 599.7" class="hw"/>
<path d="M1630.9 547.7 L1613.3 548.7 L1607.0 553.9 L1611.2 574.7 L1617.4 599.7 L1621.6 616.3" class="hw"/>
<path d="M1628.8 472.9 L1638.2 481.2 L1652.7 478.1 L1671.5 478.1" class="hw"/>
<path d="M1613.0 612.3 L1617.8 637.8 L1613.0 663.3 L1605.1 682.4 L1596.4 698.4 L1595.5 723.9 L1593.9 749.4 L1596.4 768.5 L1606.6 781.3 L1625.8 794.0 L1641.7 810.0 L1651.3 832.3 L1654.5 866.1" class="hw"/>
<path d="M1358.0 189.6 L1374.6 221.5 L1391.3 252.0 L1413.4 290.8 L1432.9 318.5 L1441.2 335.2 L1463.4 351.8 L1477.2 365.7 L1464.8 355.8 L1479.3 367.3 L1493.7 378.9 L1505.3 393.3 L1519.7 399.1 L1537.0 407.8 L1548.6 404.9 L1560.1 393.3 L1577.5 390.4 L1594.8 399.1" class="hw"/>
<path d="M1597.7 376.0 L1617.9 381.8 L1632.3 393.3 L1646.8 403.4" class="hw"/>
<path d="M1554.8 130.0 L1556.2 152.2 L1559.0 171.6 L1568.7 185.4 L1579.8 202.1 L1583.9 213.2 L1579.8 227.0 L1575.6 246.4 L1577.0 263.1 L1585.3 279.7 L1590.9 293.6 L1599.2 310.2 L1602.0 324.1 L1599.2 340.7 L1602.0 360.1 L1599.2 370.1 L1597.7 355.8 L1594.8 373.1 L1597.7 390.4 L1606.3 404.9 L1617.9 422.2 L1625.1 439.5 L1629.4 448.2 L1630.9 477.1 L1626.8 462.5 L1628.8 472.9" class="hwi"/>
<path d="M1571.5 185.4 L1593.7 168.8 L1602.0 157.7 L1607.5 146.6 L1624.1 135.5 L1635.2 130.0" class="hwi"/>
<path d="M1729.4 131.4 L1754.3 143.9 L1773.7 150.8 L1787.6 149.4 L1798.7 141.1 L1807.0 130.0" class="hwi"/>
<path d="M1590.0 306.2 L1602.5 316.6 L1617.0 327.0 L1644.0 335.3 L1664.8 340.5 L1681.5 341.6 L1698.1 343.6 L1714.7 348.8 L1735.5 350.9 L1748.0 354.5 L1756.3 362.4" class="hwi"/>
<path d="M1831.9 130.0 L1829.1 157.7 L1827.8 177.1 L1833.3 199.3 L1831.9 215.9 L1815.3 232.5 L1798.7 251.9 L1787.6 265.7 L1768.2 276.8 L1757.1 290.7 L1754.3 307.3 L1748.8 321.1 L1751.6 335.0 L1759.9 351.6 L1768.2 369.9 L1759.2 355.8 L1765.0 378.9 L1769.3 402.0 L1773.7 425.0 L1776.5 449.6" class="hwi"/>
<path d="M1787.6 265.7 L1759.9 274.0 L1743.3 285.1 L1735.0 299.0 L1740.5 318.4 L1748.8 335.0" class="hwi"/>
<path d="M1776.5 449.6 L1759.2 453.9 L1744.8 456.8 L1724.6 462.6 L1710.2 471.2 L1695.7 485.7 L1687.1 500.1 L1681.3 511.6" class="hwi"/>
<path d="M1795.1 257.5 L1815.4 255.6 L1833.9 261.2 L1848.7 259.3 L1863.5 253.8 L1878.2 259.3 L1896.7 270.4 L1907.8 277.8 L1920.0 276.0" class="hwi"/>
<path d="M1828.4 176.2 L1843.1 179.9 L1857.9 185.4 L1870.9 200.2 L1889.3 203.9 L1900.4 211.3 L1906.0 222.4" class="hwi"/>
<path d="M1920.0 191.0 L1911.5 203.9 L1913.3 222.4 L1920.0 233.5" class="hwi"/>
<path d="M1808.0 130.0 L1809.0 167.0 L1821.0 181.7 L1828.4 191.0" class="hwi"/>
<path d="M1760.0 142.9 L1778.5 148.5 L1793.3 144.8 L1804.3 135.5 L1806.2 130.0" class="hwi"/>
<path d="M1779.4 449.6 L1799.6 436.6 L1822.7 427.9 L1840.0 416.4 L1857.4 404.8 L1877.6 387.5 L1897.8 381.8 L1920.0 383.2" class="hwi"/>
<path d="M1828.5 427.9 L1840.0 445.3 L1851.6 465.5 L1863.1 485.7 L1874.7 500.1" class="hwi"/>
<path d="M1779.4 449.6 L1799.6 456.8 L1817.0 465.5 L1840.0 479.9 L1863.1 491.4 L1877.6 500.1 L1892.0 514.5 L1906.4 534.7 L1920.0 552.0" class="hwi"/>
<path d="M1779.4 451.0 L1793.9 465.5 L1791.0 485.7 L1799.6 494.3 L1822.7 505.9 L1840.0 511.6 L1857.4 534.7 L1874.7 563.6 L1892.0 580.9 L1920.0 600.0" class="hwi"/>
<path d="M1799.6 456.8 L1798.2 485.7 L1817.0 505.9 L1840.0 523.2 L1863.1 546.3 L1886.2 569.4 L1920.0 589.6" class="hwi"/>
<path d="M1696.4 502.0 L1692.2 518.6 L1688.1 541.5 L1671.5 549.8 L1652.7 553.9 L1648.6 566.4 L1636.1 574.7 L1632.0 587.2 L1634.0 599.7 L1638.2 612.1 L1642.4 630.0 L1638.0 618.7 L1650.7 644.2 L1663.5 669.7 L1679.4 695.2 L1698.5 727.0 L1717.7 755.7 L1733.6 778.0 L1752.7 787.6 L1771.8 800.3 L1778.2 825.8 L1797.3 851.3 L1810.1 866.0" class="hwi"/>
<path d="M1671.5 478.1 L1673.5 491.6 L1677.7 508.2 L1688.1 512.4 L1690.2 529.0 L1688.1 541.5 L1690.2 558.1 L1696.4 578.9 L1700.6 595.5 L1700.6 612.1 L1696.4 630.0 L1695.4 653.7 L1711.3 679.2 L1733.6 698.3 L1752.7 714.3 L1771.8 733.4 L1791.0 755.7 L1810.1 774.8 L1829.2 794.0 L1854.7 813.1 L1880.2 832.2 L1905.7 854.5 L1920.0 866.0" class="hwi"/>
<path d="M1657.1 628.2 L1669.9 653.7 L1682.6 679.2 L1708.1 704.7 L1733.6 730.2 L1759.1 755.7 L1781.4 778.0 L1803.7 800.3 L1829.2 825.8 L1861.1 857.7" class="hwi"/>
<path d="M1746.3 749.3 L1752.7 739.8 L1775.0 733.4 L1791.0 723.8 L1803.7 707.9 L1819.6 695.2 L1861.1 682.4 L1892.9 669.7 L1920.0 660.1" class="hwi"/>
<path d="M1746.3 749.3 L1747.9 771.6 L1743.2 781.2 L1724.0 784.4 L1714.5 800.3 L1692.2 806.7 L1673.1 813.1 L1657.1 825.8 L1638.0 832.2" class="hwi"/>
<path d="M1714.5 800.3 L1724.0 819.4 L1733.6 835.4 L1743.2 851.3 L1746.3 866.0" class="hwi"/>
<path d="M1628.8 479.1 L1629.9 512.4 L1630.9 541.5 L1632.0 566.4 L1634.0 583.0 L1636.1 599.7" class="hwi"/>
<path d="M1630.9 547.7 L1613.3 548.7 L1607.0 553.9 L1611.2 574.7 L1617.4 599.7 L1621.6 616.3" class="hwi"/>
<path d="M1628.8 472.9 L1638.2 481.2 L1652.7 478.1 L1671.5 478.1" class="hwi"/>
<path d="M1613.0 612.3 L1617.8 637.8 L1613.0 663.3 L1605.1 682.4 L1596.4 698.4 L1595.5 723.9 L1593.9 749.4 L1596.4 768.5 L1606.6 781.3 L1625.8 794.0 L1641.7 810.0 L1651.3 832.3 L1654.5 866.1" class="hwi"/>
<path d="M1358.0 189.6 L1374.6 221.5 L1391.3 252.0 L1413.4 290.8 L1432.9 318.5 L1441.2 335.2 L1463.4 351.8 L1477.2 365.7 L1464.8 355.8 L1479.3 367.3 L1493.7 378.9 L1505.3 393.3 L1519.7 399.1 L1537.0 407.8 L1548.6 404.9 L1560.1 393.3 L1577.5 390.4 L1594.8 399.1" class="hwi"/>
<path d="M1597.7 376.0 L1617.9 381.8 L1632.3 393.3 L1646.8 403.4" class="hwi"/>
<g font-family="Liberation Sans, sans-serif" text-anchor="middle" fill="#2b2b2b" stroke="#fff" stroke-width="2.6" stroke-linejoin="round" paint-order="stroke">
<text x="1552" y="165.5" font-size="12.7">Novato</text>
<text x="1445.3" y="213.2" font-size="12.7">Nicasio</text>
<text x="1580.8" y="246.4" font-size="12.7">St Vincent</text>
<text x="1588.2" y="279.2" font-size="12.7">Santa Venetia</text>
<text x="1583" y="304.7" font-size="12.7">San Rafael</text>
<text x="1586.2" y="354.6" font-size="12.7">Corte Madera</text>
<text x="1571.7" y="374.5" font-size="12.7">Mill Valley</text>
<text x="1584.5" y="417.9" font-size="14.6" fill="#1f8a4c">Golden Gate</text>
<text x="1584.5" y="433.7" font-size="14.6" fill="#1f8a4c">National</text>
<text x="1584.5" y="449.6" font-size="14.6" fill="#1f8a4c">Recreation</text>
<text x="1584.5" y="465.5" font-size="14.6" fill="#1f8a4c">Area</text>
<text x="1632.7" y="600.7" font-size="12.7">Daly City</text>
<text x="1684.5" y="628.2" font-size="12.7">South San</text>
<text x="1684.7" y="642.6" font-size="12.7">Francisco</text>
<text x="1682.1" y="660.1" font-size="12.7">San Bruno</text>
<text x="1617.2" y="657.6" font-size="12.7">Pacifica</text>
<text x="1752.1" y="729.6" font-size="12.7">San Mateo</text>
<text x="1805" y="787.6" font-size="12.7">San Carlos</text>
<text x="1633.7" y="791.8" font-size="12.7">El Granada</text>
<text x="1667.5" y="826" font-size="12.7">Half</text>
<text x="1667.7" y="839.7" font-size="12.7">Moon Bay</text>
<text x="1787.5" y="504.9" font-size="12.7">Alameda</text>
<text x="1781.5" y="443" font-size="12.7">Emeryville</text>
<text x="1795" y="409.2" font-size="12.7">Berkeley</text>
<text x="1775.1" y="393.3" font-size="12.7">Albany</text>
<text x="1764" y="363.9" font-size="12.7">El Cerrito</text>
<text x="1871.4" y="404.3" font-size="12.7">Orinda</text>
<text x="1733.6" y="343.3" font-size="12.7">Richmond</text>
<text x="1735.6" y="315.6" font-size="12.7">San Pablo</text>
<text x="1773.7" y="271.8" font-size="12.7">Pinole</text>
<text x="1808.8" y="168" font-size="12.7">Vallejo</text>
<text x="1889.1" y="225.6" font-size="12.7">Benicia</text>
<text x="1806.3" y="763" font-size="12.7" text-anchor="start" font-style="italic">Bair Island</text>
<text x="1791" y="810.8" font-size="12.7" text-anchor="start">Redwood City</text>
<text x="1874.4" y="853.7" font-size="12.7" text-anchor="start">Palo Alto</text>
<text x="1852.4" y="560.6" font-size="12.7" text-anchor="start">San Leandro</text>
<text x="1894.3" y="394.7" font-size="12.7" text-anchor="start">Lafayette</text>
<text x="1889.7" y="447.6" font-size="12.7" text-anchor="start">Moraga</text>
<text x="1883.2" y="256" font-size="12.7" text-anchor="start">Martinez</text>
<text x="1796.8" y="480.5" font-size="16.5" fill="#1f1f1f" stroke-width="3">Oakland</text>
<text x="1796.8" y="480.5" font-size="16.5" fill="#1f1f1f" stroke="#1f1f1f" stroke-width="0.7">Oakland</text>
<text x="1675.4" y="513.4" font-size="21.5" fill="#1f1f1f" stroke-width="3.4" textLength="142" lengthAdjust="spacingAndGlyphs">San Francisco</text>
<text x="1675.4" y="513.4" font-size="21.5" fill="#1f1f1f" stroke="#1f1f1f" stroke-width="0.8" textLength="142" lengthAdjust="spacingAndGlyphs">San Francisco</text>
</g>
<g font-family="Liberation Sans, sans-serif" font-style="italic" fill="#2f6dcb" text-anchor="middle">
<text x="1705.3" y="209" font-size="12.7" transform="rotate(3 1705 205)">San Pablo Bay</text>
<text x="1380.500" y="510.600" font-size="12.700" text-anchor="end" transform="rotate(11 1380 510)">Farallones</text>
</g>
<g font-family="Liberation Sans, sans-serif" text-anchor="middle" font-size="8.5">
<rect x="1581.6" y="167.3" width="13.0" height="13" rx="6" fill="#fff" stroke="#555" stroke-width="0.9"/><text x="1588.1" y="176.8" fill="#333">37</text>
<rect x="1741.5" y="131.0" width="13.0" height="13" rx="6" fill="#fff" stroke="#555" stroke-width="0.9"/><text x="1748" y="140.5" fill="#333">37</text>
<path d="M1588.4 323.2q4 2 8 0q4 2 8 0q2 5 0 9q-1 5-8 7q-7-2-8-7q-2-4 0-9z" fill="#fff" stroke="#555" stroke-width="0.9"/><text x="1596.4" y="333.7" fill="#333">101</text>
<path d="M1644.9 332.5h19.0q2 7-1 10q-3 4-8.5 6q-5.5-2-8.5-6q-3-3-1-10z" fill="#3f73c8" stroke="#fff" stroke-width="0.8"/><path d="M1644.9 332.5h19.0l0.4 3h-19.8z" fill="#d9534f"/><text x="1654.4" y="343.7" fill="#fff" font-weight="bold">580</text>
<path d="M1847.0 484.4h19.0q2 7-1 10q-3 4-8.5 6q-5.5-2-8.5-6q-3-3-1-10z" fill="#3f73c8" stroke="#fff" stroke-width="0.8"/><path d="M1847.0 484.4h19.0l0.4 3h-19.8z" fill="#d9534f"/><text x="1856.5" y="495.6" fill="#fff" font-weight="bold">580</text>
<rect x="1480.5" y="364.3" width="12.0" height="13" rx="6" fill="#fff" stroke="#555" stroke-width="0.9"/><text x="1486.5" y="373.8" fill="#333">1</text>
<rect x="1622.4" y="532.5" width="12.0" height="13" rx="6" fill="#fff" stroke="#555" stroke-width="0.9"/><text x="1628.4" y="542.0" fill="#333">1</text>
<rect x="1599.7" y="684.2" width="12.0" height="13" rx="6" fill="#fff" stroke="#555" stroke-width="0.9"/><text x="1605.7" y="693.7" fill="#333">1</text>
<rect x="1613.0" y="375.3" width="15.5" height="13" rx="6" fill="#fff" stroke="#555" stroke-width="0.9"/><text x="1620.8" y="384.8" fill="#333">131</text>
<path d="M1807.2 225.0h15.0q2 7-1 10q-3 4-6.5 6q-3.5-2-6.5-6q-3-3-1-10z" fill="#3f73c8" stroke="#fff" stroke-width="0.8"/><path d="M1807.2 225.0h15.0l0.4 3h-15.8z" fill="#d9534f"/><text x="1814.7" y="236.2" fill="#fff" font-weight="bold">80</text>
<path d="M1727.8 452.7h15.0q2 7-1 10q-3 4-6.5 6q-3.5-2-6.5-6q-3-3-1-10z" fill="#3f73c8" stroke="#fff" stroke-width="0.8"/><path d="M1727.8 452.7h15.0l0.4 3h-15.8z" fill="#d9534f"/><text x="1735.3" y="463.9" fill="#fff" font-weight="bold">80</text>
<path d="M1856.7 190.4h19.0q2 7-1 10q-3 4-8.5 6q-5.5-2-8.5-6q-3-3-1-10z" fill="#3f73c8" stroke="#fff" stroke-width="0.8"/><path d="M1856.7 190.4h19.0l0.4 3h-19.8z" fill="#d9534f"/><text x="1866.2" y="201.6" fill="#fff" font-weight="bold">780</text>
<path d="M1911.5 176.6h19.0q2 7-1 10q-3 4-8.5 6q-5.5-2-8.5-6q-3-3-1-10z" fill="#3f73c8" stroke="#fff" stroke-width="0.8"/><path d="M1911.5 176.6h19.0l0.4 3h-19.8z" fill="#d9534f"/><text x="1921" y="187.8" fill="#fff" font-weight="bold">680</text>
<rect x="1843.7" y="453.8" width="13.0" height="13" rx="6" fill="#fff" stroke="#555" stroke-width="0.9"/><text x="1850.2" y="463.3" fill="#333">13</text>
<path d="M1649.1 544.9h19.0q2 7-1 10q-3 4-8.5 6q-5.5-2-8.5-6q-3-3-1-10z" fill="#3f73c8" stroke="#fff" stroke-width="0.8"/><path d="M1649.1 544.9h19.0l0.4 3h-19.8z" fill="#d9534f"/><text x="1658.6" y="556.1" fill="#fff" font-weight="bold">280</text>
<path d="M1628.7 616.6h19.0q2 7-1 10q-3 4-8.5 6q-5.5-2-8.5-6q-3-3-1-10z" fill="#3f73c8" stroke="#fff" stroke-width="0.8"/><path d="M1628.7 616.6h19.0l0.4 3h-19.8z" fill="#d9534f"/><text x="1638.2" y="627.8" fill="#fff" font-weight="bold">280</text>
<path d="M1743.9 781.2h19.0q2 7-1 10q-3 4-8.5 6q-5.5-2-8.5-6q-3-3-1-10z" fill="#3f73c8" stroke="#fff" stroke-width="0.8"/><path d="M1743.9 781.2h19.0l0.4 3h-19.8z" fill="#d9534f"/><text x="1753.4" y="792.4" fill="#fff" font-weight="bold">280</text>
<path d="M1873.3 566.7h19.0q2 7-1 10q-3 4-8.5 6q-5.5-2-8.5-6q-3-3-1-10z" fill="#3f73c8" stroke="#fff" stroke-width="0.8"/><path d="M1873.3 566.7h19.0l0.4 3h-19.8z" fill="#d9534f"/><text x="1882.8" y="577.9" fill="#fff" font-weight="bold">880</text>
<rect x="1740.5" y="755.5" width="13.0" height="13" rx="6" fill="#fff" stroke="#555" stroke-width="0.9"/><text x="1747" y="765.0" fill="#333">92</text>
<rect x="1687.3" y="796.4" width="13.0" height="13" rx="6" fill="#fff" stroke="#555" stroke-width="0.9"/><text x="1693.8" y="805.9" fill="#333">92</text>
<rect x="1906.2" y="654.2" width="13.0" height="13" rx="6" fill="#fff" stroke="#555" stroke-width="0.9"/><text x="1912.7" y="663.7" fill="#333">92</text>
<rect x="1719.8" y="812.0" width="13.0" height="13" rx="6" fill="#fff" stroke="#555" stroke-width="0.9"/><text x="1726.3" y="821.5" fill="#333">35</text>
</g>
<circle cx="1638.8" cy="489.5" r="5.6" fill="none" stroke="#222b30" stroke-width="2.4"/>
<path d="M1638.8 488.5c-3-5-8.3-8.5-8.3-14a8.3 8.3 0 0 1 16.6 0c0 5.5-5.3 9-8.3 14z" fill="#222b30"/><circle cx="1638.8" cy="474.3" r="3.6" fill="#fff"/>
<circle cx="1662.7" cy="512.4" r="10.3" fill="none" stroke="#222b30" stroke-width="3.6"/><circle cx="1662.7" cy="512.4" r="7.3" fill="none" stroke="#fff" stroke-width="2.4"/><circle cx="1662.7" cy="512.4" r="6.1" fill="#222b30"/>
</svg>
<div class="abs" style="left:506px;top:594px;width:45px;height:44.5px;background:#fff;border-radius:2px;box-shadow:0 1px 4px rgba(0,0,0,.3)"></div>
<svg style="left:517px;top:599px" width="22" height="35" viewBox="0 0 22 35"><path d="M7 13L3.500 14.500 1.500 24l3 .5L6 18.500 6.500 33H10l.600-8 .600 8h3.500l.500-14.500 1.500 6 3-.500-2-9.500-3.500-1.500z" fill="#f9b42a" stroke="#e39a1f" stroke-width=".7" stroke-linejoin="round"/><circle cx="10.600" cy="6.800" r="5.700" fill="#f9b42a" stroke="#e39a1f" stroke-width=".7"/><path d="M7.500 13h6.200l-3.100 5z" fill="#e58a2b"/></svg>
<div class="abs" style="left:506px;top:675px;width:45px;height:90px;background:#fff;border-radius:2px;box-shadow:0 1px 4px rgba(0,0,0,.3)"></div>
<div class="abs" style="left:511px;top:720px;width:34px;height:1px;background:#e6e6e6"></div>
<svg style="left:518px;top:687px" width="21" height="67" viewBox="0 0 21 67"><path d="M0 10.500h21M10.500 0v21M0 57h21" stroke="#666" stroke-width="3.600" fill="none"/></svg>
<div class="abs" style="left:129px;top:777px;width:433px;height:15px;background:rgba(245,245,245,.72)"></div>
<div class="abs" style="left:237px;top:777px;width:1px;height:15px;background:rgba(200,205,215,.8)"></div>
<div class="abs" style="left:373px;top:777px;width:1px;height:15px;background:rgba(200,205,215,.8)"></div>
<div class="abs" style="left:453px;top:777px;width:1px;height:15px;background:rgba(200,205,215,.8)"></div>
<span class="t" style="left:134.6px;top:779.2px;font-size:10.6px;line-height:10.6px;color:#2a2a2a;letter-spacing:0.30px;">Keyboard shortcuts</span>
<span class="t" style="left:245.6px;top:779.2px;font-size:10.6px;line-height:10.6px;color:#2a2a2a;letter-spacing:0.30px;">Map data ©2023 Google</span>
<span class="t" style="left:381.6px;top:779.2px;font-size:10.6px;line-height:10.6px;color:#2a2a2a;letter-spacing:0.27px;">Terms of Use</span>
<span class="t" style="left:461.5px;top:779.2px;font-size:10.6px;line-height:10.6px;color:#2a2a2a;letter-spacing:0.21px;">Report a map error</span>
<svg style="left:9px;top:766px" width="68" height="26" viewBox="0 0 68 26"><g font-family="Liberation Sans, sans-serif" font-size="21" stroke="#fff" stroke-width="2.2" paint-order="stroke" stroke-linejoin="round" letter-spacing="-0.6"><text x="1" y="19"><tspan fill="#4285f4">G</tspan><tspan fill="#ea4335">o</tspan><tspan fill="#fbbc05">o</tspan><tspan fill="#4285f4">g</tspan><tspan fill="#34a853">l</tspan><tspan fill="#ea4335">e</tspan></text></g></svg>
</section>
</body></html>
